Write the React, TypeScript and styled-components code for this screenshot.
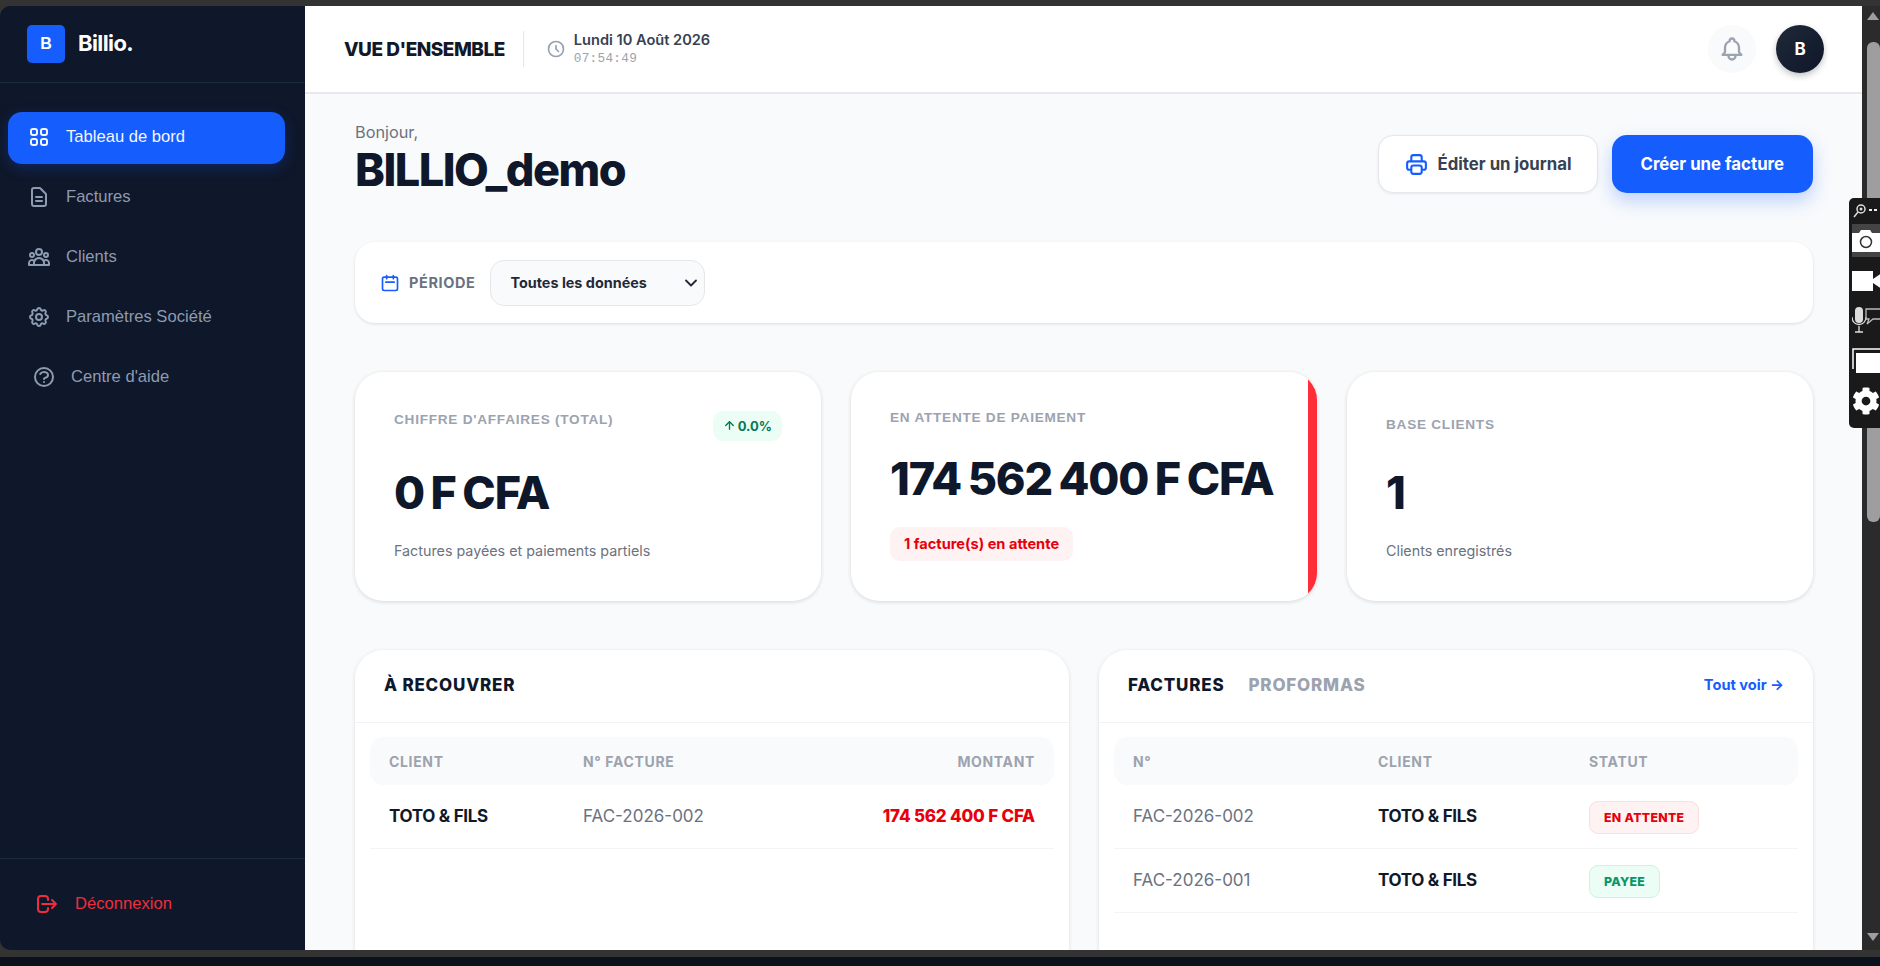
import { createGlobalStyle, styled } from 'styled-components'
import { ArrowUp, ChevronDown } from 'lucide-react'
import { FaCog } from 'react-icons/fa'
import {
  HiOutlineBell,
  HiOutlineCalendar,
  HiOutlineClock,
  HiOutlineCog,
  HiOutlineDocumentText,
  HiOutlineLogout,
  HiOutlinePrinter,
  HiOutlineQuestionMarkCircle,
  HiOutlineUserGroup,
  HiOutlineViewGrid,
} from 'react-icons/hi'

const GlobalStyle = createGlobalStyle`
  html, body {
    margin: 0;
    height: 100%;
    overflow: hidden;
    background: #333333;
    font-family: Inter, "Liberation Sans", sans-serif;
  }
  * { box-sizing: border-box; }
`

const Screen = styled.div`
  position: relative;
  width: 1880px;
  height: 966px;
  display: flex;
  flex-direction: column;
  background: #333333;
  overflow: hidden;
`

const WindowRow = styled.div`
  margin-top: 6px;
  height: 944px;
  display: flex;
`

const Sidebar = styled.aside`
  width: 305px;
  flex-shrink: 0;
  display: flex;
  flex-direction: column;
  background: #0f172a;
  border-radius: 10px 0 0 10px;
`

const Brand = styled.div`
  height: 77px;
  padding: 19px 0 0 27px;
  display: flex;
  align-items: flex-start;
  gap: 13px;
  border-bottom: 1px solid #1b2a3c;
`

const BrandMark = styled.div`
  width: 38px;
  height: 38px;
  display: flex;
  align-items: center;
  justify-content: center;
  border-radius: 5px;
  background: #155dfc;
  color: #fff;
  font: 700 16px "Liberation Sans", sans-serif;
`

const BrandName = styled.div`
  color: #fff;
  font: 700 22px/37px Inter, sans-serif;
  letter-spacing: -0.6px;
`

const Nav = styled.nav`
  flex: 1;
  padding: 29px 20px 0 8px;
  display: flex;
  flex-direction: column;
  gap: 8px;
`

const NavItem = styled.a<{ $active?: boolean; $shift?: boolean }>`
  height: 52px;
  padding: 0 0 2px ${(p) => (p.$shift ? 24 : 19)}px;
  display: flex;
  align-items: center;
  gap: 15px;
  border-radius: 14px;
  background: ${(p) => (p.$active ? '#155dfc' : 'transparent')};
  box-shadow: ${(p) => (p.$active ? '0 4px 14px rgba(21, 93, 252, 0.25)' : 'none')};
  color: ${(p) => (p.$active ? '#f3f6ff' : '#8e9bb0')};
  font: 400 16.6px "Liberation Sans", sans-serif;
`

const SidebarFoot = styled.div`
  height: 92px;
  padding: 27px 0 0 35px;
  display: flex;
  align-items: flex-start;
  gap: 16px;
  border-top: 1px solid #1b2a3c;
  color: #ef2d3c;
  font: 400 16.6px/36px "Liberation Sans", sans-serif;

  svg {
    margin-top: 6px;
  }
`

const Main = styled.div`
  width: 1557px;
  flex-shrink: 0;
  display: flex;
  flex-direction: column;
  background: #f8fafc;
  overflow: hidden;
`

const Header = styled.header`
  height: 88px;
  flex-shrink: 0;
  padding: 0 38px 0 39px;
  display: flex;
  align-items: center;
  background: #fff;
  border-bottom: 2px solid #e7e9ee;
`

const HeaderTitle = styled.h1`
  margin: 0;
  padding-right: 18px;
  color: #111827;
  font: 800 19px Inter, sans-serif;
  letter-spacing: -0.5px;
`

const HeaderClock = styled.div`
  height: 36px;
  padding-left: 22px;
  display: flex;
  align-items: center;
  gap: 8px;
  border-left: 1px solid #e5e7eb;
  color: #98a1b0;
`

const ClockText = styled.div`
  display: flex;
  flex-direction: column;
`

const DateLine = styled.div`
  color: #374151;
  font: 600 14.6px/19px Inter, sans-serif;
`

const TimeLine = styled.div`
  color: #9ca3af;
  font: 400 12.7px/18px "Liberation Mono", monospace;
  letter-spacing: 0.3px;
`

const HeaderRight = styled.div`
  margin-left: auto;
  display: flex;
  align-items: center;
  gap: 20px;
`

const BellButton = styled.div`
  width: 48px;
  height: 48px;
  display: flex;
  align-items: center;
  justify-content: center;
  border-radius: 50%;
  background: #f9fafb;
  color: #9ca3af;
`

const Avatar = styled.div`
  width: 48px;
  height: 48px;
  display: flex;
  align-items: center;
  justify-content: center;
  border-radius: 50%;
  background: linear-gradient(135deg, #1f2937, #0f172a);
  box-shadow: 0 3px 6px rgba(15, 23, 42, 0.25);
  color: #fff;
  font: 700 17px Inter, sans-serif;
`

const Content = styled.main`
  flex: 1;
  padding: 28px 49px 0 50px;
  display: flex;
  flex-direction: column;
  overflow: hidden;
`

const TopRow = styled.div`
  height: 76px;
  flex-shrink: 0;
  display: flex;
  align-items: flex-start;
  justify-content: space-between;
`

const Hello = styled.div`
  color: #6b7280;
  font: 400 16.3px/20px Inter, sans-serif;
`

const UserName = styled.div`
  color: #0f172a;
  font: 800 45px/56px Inter, sans-serif;
  letter-spacing: -1.5px;
`

const Actions = styled.div`
  padding-top: 13px;
  display: flex;
  gap: 14px;
`

const Button = styled.button<{ $primary?: boolean }>`
  height: 58px;
  padding: 0 ${(p) => (p.$primary ? 29 : 25)}px;
  display: flex;
  align-items: center;
  gap: 9px;
  border: ${(p) => (p.$primary ? 'none' : '1px solid #e5e7eb')};
  border-radius: 15px;
  background: ${(p) => (p.$primary ? '#155dfc' : '#fff')};
  box-shadow: ${(p) =>
    p.$primary ? '0 8px 18px rgba(21, 93, 252, 0.25)' : '0 1px 3px rgba(0, 0, 0, 0.08)'};
  color: ${(p) => (p.$primary ? '#fff' : '#374151')};
  font: 700 16.8px Inter, sans-serif;
`

const PeriodCard = styled.section`
  margin-top: 44px;
  height: 81px;
  flex-shrink: 0;
  padding-left: 25px;
  display: flex;
  align-items: center;
  border-radius: 20px;
  background: #fff;
  box-shadow: 0 1px 3px rgba(0, 0, 0, 0.12);
  color: #155dfc;
`

const PeriodLabel = styled.span`
  margin: 0 15px 0 9px;
  color: #6b7280;
  font: 700 14.5px Inter, sans-serif;
  letter-spacing: 0.6px;
`

const SelectBox = styled.div`
  width: 215px;
  height: 46px;
  padding: 0 3px 0 19px;
  display: flex;
  align-items: center;
  justify-content: space-between;
  border: 1px solid #e5e7eb;
  border-radius: 14px;
  background: #f9fafb;
  color: #1f2937;
  font: 700 14.4px Inter, sans-serif;
`

const KpiGrid = styled.div`
  margin-top: 49px;
  display: grid;
  grid-template-columns: repeat(3, 1fr);
  gap: 30px;
`

const KpiCard = styled.article<{ $accent?: boolean; $inset?: number }>`
  position: relative;
  height: 229px;
  padding: ${(p) => p.$inset ?? 0}px 39px 3px;
  display: flex;
  flex-direction: column;
  justify-content: center;
  overflow: hidden;
  border-radius: 28px;
  background: #fff;
  box-shadow: 0 1px 4px rgba(0, 0, 0, 0.14);

  ${(p) =>
    p.$accent &&
    `&::after {
      content: '';
      position: absolute;
      top: 0;
      right: 0;
      bottom: 0;
      width: 9px;
      background: #ff2d37;
    }`}
`

const KpiTop = styled.div`
  display: flex;
  align-items: flex-start;
  justify-content: space-between;
`

const KpiLabel = styled.div`
  color: #9ca3af;
  font: 700 13.6px/18px "Liberation Sans", sans-serif;
  letter-spacing: 0.75px;
`

const TrendBadge = styled.div`
  height: 30px;
  padding: 0 10px;
  display: flex;
  align-items: center;
  gap: 2px;
  border-radius: 10px;
  background: #ecfdf5;
  color: #047857;
  font: 700 13px Inter, sans-serif;
`

const KpiValue = styled.div<{ $gap: number }>`
  margin-top: ${(p) => p.$gap}px;
  color: #0f172a;
  font: 800 45px/52px Inter, sans-serif;
  letter-spacing: -1.2px;
  word-spacing: -2px;
  white-space: nowrap;
`

const KpiNote = styled.div`
  margin-top: 23px;
  color: #6b7280;
  font: 400 14.3px/18px Inter, sans-serif;
`

const AlertPill = styled.div`
  margin-top: 22px;
  align-self: flex-start;
  height: 34px;
  padding: 0 14px;
  display: flex;
  align-items: center;
  border-radius: 10px;
  background: #fef2f2;
  color: #e7000b;
  font: 700 14.6px Inter, sans-serif;
`

const TablesGrid = styled.div`
  margin-top: 49px;
  display: grid;
  grid-template-columns: 1fr 1fr;
  gap: 30px;
`

const TableCard = styled.section`
  height: 400px;
  border-radius: 28px;
  background: #fff;
  box-shadow: 0 1px 4px rgba(0, 0, 0, 0.12);
`

const TableHeader = styled.div`
  height: 73px;
  padding: 0 29px 2px;
  display: flex;
  align-items: center;
  gap: 24px;
  border-bottom: 1px solid #f1f3f6;
`

const TableTitle = styled.h2<{ $muted?: boolean }>`
  margin: 0;
  color: ${(p) => (p.$muted ? '#9ca3af' : '#0f172a')};
  font: 800 17px Inter, sans-serif;
  letter-spacing: 0.8px;
`

const SeeAll = styled.a`
  margin-left: auto;
  color: #155dfc;
  font: 700 14.6px Inter, sans-serif;
`

const Table = styled.div`
  padding: 14px 15px 0;
`

const Cols = styled.div<{ $cols: string }>`
  display: grid;
  grid-template-columns: ${(p) => p.$cols};
  padding: 0 19px;
  align-items: center;
`

const HeadRow = styled(Cols)`
  height: 48px;
  border-radius: 14px;
  background: #f9fafb;
  color: #9ca3af;
  font: 700 14px Inter, sans-serif;
  letter-spacing: 0.65px;
`

const Row = styled(Cols)`
  height: 64px;
  padding-bottom: 2px;
  border-bottom: 1px solid #f3f4f6;
`

const ClientCell = styled.div`
  color: #111827;
  font: 700 17px Inter, sans-serif;
  letter-spacing: -0.3px;
`

const RefCell = styled.div`
  color: #6b7280;
  font: 400 17px Inter, sans-serif;
`

const AmountCell = styled.div`
  color: #e7000b;
  text-align: right;
  font: 800 17px Inter, sans-serif;
  letter-spacing: -0.2px;
  white-space: nowrap;
`

const RightHead = styled.div`
  text-align: right;
`

const StatusBadge = styled.span<{ $paid?: boolean }>`
  height: 33px;
  margin-top: 3px;
  padding: 0 14px;
  display: inline-flex;
  align-items: center;
  justify-self: start;
  border: 1px solid ${(p) => (p.$paid ? '#c9f5df' : '#fddede')};
  border-radius: 9px;
  background: ${(p) => (p.$paid ? '#ecfdf5' : '#fef2f2')};
  color: ${(p) => (p.$paid ? '#059669' : '#e7000b')};
  font: 800 12.3px Inter, sans-serif;
  letter-spacing: 0.3px;
`

const ScrollBar = styled.div`
  width: 18px;
  flex-shrink: 0;
  position: relative;
  background: #2b2b2b;
`

const ScrollThumb = styled.div`
  position: absolute;
  top: 36px;
  left: 5px;
  width: 13px;
  height: 480px;
  border-radius: 6px;
  background: #9e9e9e;
`

const ScrollArrow = styled.div<{ $down?: boolean }>`
  position: absolute;
  ${(p) => (p.$down ? 'bottom: 9px;' : 'top: 6px;')}
  left: 5px;
  width: 0;
  height: 0;
  border-left: 6px solid transparent;
  border-right: 6px solid transparent;
  ${(p) => (p.$down ? 'border-top: 8px solid #9e9e9e;' : 'border-bottom: 8px solid #9e9e9e;')}
`

const BottomEdge = styled.div`
  height: 7px;
  background: #333333;
`

const Taskbar = styled.div`
  flex: 1;
  background: #0a101c;
`

const Recorder = styled.div`
  position: absolute;
  top: 198px;
  left: 1849px;
  width: 31px;
  height: 230px;
  padding: 2px 0 0 3px;
  overflow: hidden;
  border-radius: 5px 0 0 5px;
  background: #1a1a1a;
`

const RecorderHead = styled.div`
  height: 22px;
  margin-bottom: 2px;
  display: flex;
  align-items: center;
`

const RecorderTool = styled.div<{ $on?: boolean }>`
  width: 40px;
  height: 33px;
  margin-bottom: 7px;
  display: flex;
  align-items: center;
  color: #fff;
  background: ${(p) => (p.$on ? '#444444' : 'transparent')};
`

const recoRows = [
  { client: 'TOTO & FILS', ref: 'FAC-2026-002', amount: '174 562 400 F CFA' },
]

const invoices = [
  { ref: 'FAC-2026-002', client: 'TOTO & FILS', paid: false },
  { ref: 'FAC-2026-001', client: 'TOTO & FILS', paid: true },
]

function App() {
  return (
    <Screen>
      <GlobalStyle />
      <WindowRow>
        <Sidebar>
          <Brand>
            <BrandMark>B</BrandMark>
            <BrandName>Billio.</BrandName>
          </Brand>
          <Nav>
            <NavItem $active>
              <HiOutlineViewGrid size={24} />
              Tableau de bord
            </NavItem>
            <NavItem>
              <HiOutlineDocumentText size={24} />
              Factures
            </NavItem>
            <NavItem>
              <HiOutlineUserGroup size={24} />
              Clients
            </NavItem>
            <NavItem>
              <HiOutlineCog size={24} />
              Paramètres Société
            </NavItem>
            <NavItem $shift>
              <HiOutlineQuestionMarkCircle size={24} />
              Centre d'aide
            </NavItem>
          </Nav>
          <SidebarFoot>
            <HiOutlineLogout size={24} />
            Déconnexion
          </SidebarFoot>
        </Sidebar>
        <Main>
          <Header>
            <HeaderTitle>VUE D'ENSEMBLE</HeaderTitle>
            <HeaderClock>
              <HiOutlineClock size={20} />
              <ClockText>
                <DateLine>Lundi 10 Août 2026</DateLine>
                <TimeLine>07:54:49</TimeLine>
              </ClockText>
            </HeaderClock>
            <HeaderRight>
              <BellButton>
                <HiOutlineBell size={28} />
              </BellButton>
              <Avatar>B</Avatar>
            </HeaderRight>
          </Header>
          <Content>
            <TopRow>
              <div>
                <Hello>Bonjour,</Hello>
                <UserName>BILLIO_demo</UserName>
              </div>
              <Actions>
                <Button>
                  <HiOutlinePrinter size={25} color="#155dfc" />
                  Éditer un journal
                </Button>
                <Button $primary>Créer une facture</Button>
              </Actions>
            </TopRow>
            <PeriodCard>
              <HiOutlineCalendar size={20} />
              <PeriodLabel>PÉRIODE</PeriodLabel>
              <SelectBox>
                Toutes les données
                <ChevronDown size={20} strokeWidth={2.2} />
              </SelectBox>
            </PeriodCard>
            <KpiGrid>
              <KpiCard>
                <KpiTop>
                  <KpiLabel>CHIFFRE D'AFFAIRES (TOTAL)</KpiLabel>
                  <TrendBadge>
                    <ArrowUp size={13} strokeWidth={2.5} />
                    0.0%
                  </TrendBadge>
                </KpiTop>
                <KpiValue $gap={26}>0 F CFA</KpiValue>
                <KpiNote>Factures payées et paiements partiels</KpiNote>
              </KpiCard>
              <KpiCard $accent>
                <KpiLabel>EN ATTENTE DE PAIEMENT</KpiLabel>
                <KpiValue $gap={26}>174 562 400 F CFA</KpiValue>
                <AlertPill>1 facture(s) en attente</AlertPill>
              </KpiCard>
              <KpiCard $inset={6}>
                <KpiLabel>BASE CLIENTS</KpiLabel>
                <KpiValue $gap={33}>1</KpiValue>
                <KpiNote>Clients enregistrés</KpiNote>
              </KpiCard>
            </KpiGrid>
            <TablesGrid>
              <TableCard>
                <TableHeader>
                  <TableTitle>À RECOUVRER</TableTitle>
                </TableHeader>
                <Table>
                  <HeadRow $cols="194px 1fr 1fr">
                    <div>CLIENT</div>
                    <div>N° FACTURE</div>
                    <RightHead>MONTANT</RightHead>
                  </HeadRow>
                  {recoRows.map((row) => (
                    <Row key={row.ref} $cols="194px 1fr 1fr">
                      <ClientCell>{row.client}</ClientCell>
                      <RefCell>{row.ref}</RefCell>
                      <AmountCell>{row.amount}</AmountCell>
                    </Row>
                  ))}
                </Table>
              </TableCard>
              <TableCard>
                <TableHeader>
                  <TableTitle>FACTURES</TableTitle>
                  <TableTitle $muted>PROFORMAS</TableTitle>
                  <SeeAll>Tout voir →</SeeAll>
                </TableHeader>
                <Table>
                  <HeadRow $cols="245px 211px 1fr">
                    <div>N°</div>
                    <div>CLIENT</div>
                    <div>STATUT</div>
                  </HeadRow>
                  {invoices.map((inv) => (
                    <Row key={inv.ref} $cols="245px 211px 1fr">
                      <RefCell>{inv.ref}</RefCell>
                      <ClientCell>{inv.client}</ClientCell>
                      <StatusBadge $paid={inv.paid}>{inv.paid ? 'PAYEE' : 'EN ATTENTE'}</StatusBadge>
                    </Row>
                  ))}
                </Table>
              </TableCard>
            </TablesGrid>
          </Content>
        </Main>
        <ScrollBar>
          <ScrollArrow />
          <ScrollThumb />
          <ScrollArrow $down />
        </ScrollBar>
      </WindowRow>
      <BottomEdge />
      <Taskbar />
      <Recorder>
        <RecorderHead>
          <svg width="28" height="16" viewBox="0 0 28 16">
            <circle cx="9" cy="6" r="4" fill="none" stroke="#ddd" strokeWidth="1.5" />
            <circle cx="9" cy="6" r="1.5" fill="#ddd" />
            <path d="M6 9 2 14" stroke="#ddd" strokeWidth="1.5" />
            <path d="M17 7h3M22 7h3" stroke="#eee" strokeWidth="2" />
          </svg>
        </RecorderHead>
        <RecorderTool $on>
          <svg width="30" height="22" viewBox="0 0 30 22">
            <path d="M0 3h7l2-3h9l2 3h10v19H0z" fill="#fff" />
            <circle cx="14" cy="12" r="5.5" fill="none" stroke="#333" strokeWidth="1.5" />
          </svg>
        </RecorderTool>
        <RecorderTool>
          <svg width="30" height="20" viewBox="0 0 30 20">
            <rect x="0" y="0" width="21" height="20" fill="#fff" />
            <path d="M21 8 30 2v16l-9-6z" fill="#fff" />
          </svg>
        </RecorderTool>
        <RecorderTool>
          <svg width="30" height="27" viewBox="0 0 30 27">
            <rect x="3" y="0" width="8" height="16" rx="4" fill="#ddd" />
            <path d="M0 10c0 10 14 10 14 0M7 19v6M3 25h8" fill="none" stroke="#ddd" strokeWidth="1.3" />
            <path d="M14 2h16v10H21l-6 5 2-5h-3z" fill="none" stroke="#bbb" strokeWidth="1.3" />
          </svg>
        </RecorderTool>
        <RecorderTool>
          <svg width="30" height="25" viewBox="0 0 30 25">
            <path d="M1 21V1h29" fill="none" stroke="#fff" strokeWidth="1.5" />
            <rect x="4" y="5" width="26" height="20" fill="#fff" />
          </svg>
        </RecorderTool>
        <RecorderTool>
          <FaCog size={28} />
        </RecorderTool>
      </Recorder>
    </Screen>
  )
}

export default App
